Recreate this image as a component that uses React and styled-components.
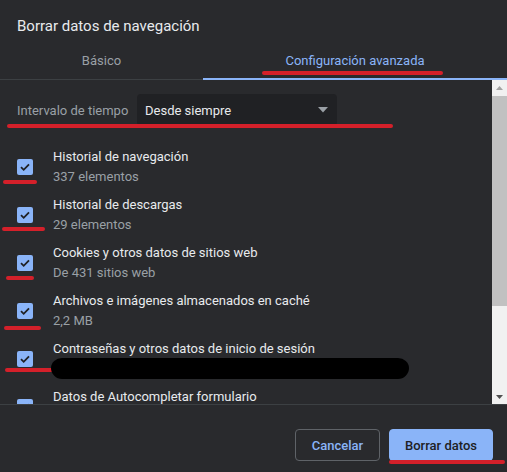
import React from "react";
import styled, { createGlobalStyle } from "styled-components";

const Global = createGlobalStyle`
  html, body { margin: 0; padding: 0; background: #292a2d; }
  body { font-family: Roboto, "Noto Sans", "Liberation Sans", sans-serif; }
  * { box-sizing: border-box; }
`;

const Dialog = styled.div`
  position: relative;
  width: 507px;
  height: 472px;
  background: #292a2d;
  display: flex;
  flex-direction: column;
  overflow: hidden;
`;

const Title = styled.h1`
  margin: 0;
  padding: 16px 17px 0;
  font-size: 15px;
  line-height: 20px;
  font-weight: 400;
  color: #e8eaed;
  height: 35px;
`;

const TabBar = styled.div`
  display: flex;
  border-bottom: 1px solid #3c4043;
`;

const Tab = styled.div`
  flex: ${(p) => p.$grow};
  text-align: center;
  font-size: 13px;
  line-height: 20px;
  padding: 16px 0 7px;
  color: ${(p) => (p.$active ? "#8ab4f8" : "#9aa0a6")};
  border-bottom: 2px solid ${(p) => (p.$active ? "#8ab4f8" : "transparent")};
  margin-bottom: -1px;
`;

const Body = styled.div`
  flex: 1;
  display: flex;
  min-height: 0;
  border-bottom: 1px solid #3c4043;
`;

const Content = styled.div`
  flex: 1;
  overflow: hidden;
  padding: 14px 0 0 17px;
`;

const RangeRow = styled.div`
  display: flex;
  align-items: center;
  height: 32px;
  margin-bottom: 17px;
`;

const RangeLabel = styled.span`
  width: 120px;
  font-size: 13px;
  color: #9aa0a6;
`;

const Select = styled.div`
  width: 200px;
  height: 32px;
  border-radius: 4px;
  background: #202124;
  display: flex;
  align-items: center;
  justify-content: space-between;
  padding: 0 9px 0 8px;
  font-size: 13px;
  color: #e8eaed;
`;

const Item = styled.div`
  display: flex;
  align-items: center;
  height: 48px;
  padding: 4px 0;
  gap: 20px;
`;

const Check = styled.div`
  width: 16px;
  height: 16px;
  border-radius: 2px;
  background: #8ab4f8;
  display: flex;
  align-items: center;
  justify-content: center;
  flex: none;
`;

const Texts = styled.div`
  display: flex;
  flex-direction: column;
`;

const ItemTitle = styled.span`
  font-size: 13px;
  line-height: 20px;
  color: #e8eaed;
`;

const ItemSub = styled.span`
  font-size: 13px;
  line-height: 20px;
  color: #9aa0a6;
`;

const Scrollbar = styled.div`
  width: 15px;
  background: #f1f1f1;
  display: flex;
  flex-direction: column;
  align-items: center;
`;

const Arrow = styled.div`
  height: 15px;
  width: 15px;
  display: flex;
  align-items: center;
  justify-content: center;
`;

const Thumb = styled.div`
  width: 15px;
  height: 210px;
  background: #c1c1c1;
  margin-top: 1px;
`;

const Spacer = styled.div`
  flex: 1;
`;

const Footer = styled.div`
  height: 67px;
  display: flex;
  justify-content: flex-end;
  align-items: flex-start;
  padding: 24px 14px 0 0;
  gap: 9px;
`;

const Button = styled.button`
  height: 32px;
  width: ${(p) => p.$w}px;
  padding: 0;
  border-radius: 4px;
  font-family: inherit;
  font-size: 13px;
  font-weight: 500;
  white-space: nowrap;
  border: 1px solid ${(p) => (p.$primary ? "#8ab4f8" : "#5f6368")};
  background: ${(p) => (p.$primary ? "#8ab4f8" : "transparent")};
  color: ${(p) => (p.$primary ? "#202124" : "#8ab4f8")};
`;

const Mark = styled.div`
  position: absolute;
  background: #d4202a;
  height: 4px;
  border-radius: 2px;
`;

const Blot = styled.div`
  position: absolute;
  left: 51px;
  top: 358px;
  width: 358px;
  height: 21px;
  background: #000;
  border-radius: 11px 11px 11px 11px / 10px 10px 11px 11px;
`;

const CheckIcon = () => (
  <svg width="12" height="12" viewBox="0 0 12 12">
    <path d="M2 6.2 L4.7 8.8 L10 3.4" fill="none" stroke="#202124" strokeWidth="1.8" />
  </svg>
);

const items = [
  ["Historial de navegación", "337 elementos"],
  ["Historial de descargas", "29 elementos"],
  ["Cookies y otros datos de sitios web", "De 431 sitios web"],
  ["Archivos e imágenes almacenados en caché", "2,2 MB"],
  ["Contraseñas y otros datos de inicio de sesión", "\u00a0"],
  ["Datos de Autocompletar formulario", "\u00a0"],
];

const marks = [
  { l: 262, t: 71, w: 181 },
  { l: 7, t: 124, w: 386 },
  { l: 3, t: 180, w: 34 },
  { l: 2, t: 227, w: 43 },
  { l: 6, t: 276, w: 28 },
  { l: 4, t: 326, w: 37 },
  { l: 5, t: 368, w: 50 },
  { l: 389, t: 460, w: 116 },
];

export default function App() {
  return (
    <>
      <Global />
      <Dialog>
        <Title>Borrar datos de navegación</Title>
        <TabBar>
          <Tab $grow="203">Básico</Tab>
          <Tab $grow="304" $active>Configuración avanzada</Tab>
        </TabBar>
        <Body>
          <Content>
            <RangeRow>
              <RangeLabel>Intervalo de tiempo</RangeLabel>
              <Select>
                <span>Desde siempre</span>
                <svg width="10" height="6" viewBox="0 0 10 6">
                  <path d="M0 0 H10 L5 5.5 Z" fill="#9aa0a6" />
                </svg>
              </Select>
            </RangeRow>
            {items.map(([t, s]) => (
              <Item key={t}>
                <Check>
                  <CheckIcon />
                </Check>
                <Texts>
                  <ItemTitle>{t}</ItemTitle>
                  <ItemSub>{s}</ItemSub>
                </Texts>
              </Item>
            ))}
          </Content>
          <Scrollbar>
            <Arrow>
              <svg width="7" height="4" viewBox="0 0 7 4">
                <path d="M0 4 L3.5 0 L7 4 Z" fill="#a3a3a3" />
              </svg>
            </Arrow>
            <Thumb />
            <Spacer />
            <Arrow>
              <svg width="7" height="4" viewBox="0 0 7 4">
                <path d="M0 0 L7 0 L3.5 4 Z" fill="#505050" />
              </svg>
            </Arrow>
          </Scrollbar>
        </Body>
        <Footer>
          <Button $w={85}>Cancelar</Button>
          <Button $primary $w={104}>Borrar datos</Button>
        </Footer>
        {marks.map((m, i) => (
          <Mark key={i} style={{ left: m.l, top: m.t, width: m.w }} />
        ))}
        <Blot />
      </Dialog>
    </>
  );
}
